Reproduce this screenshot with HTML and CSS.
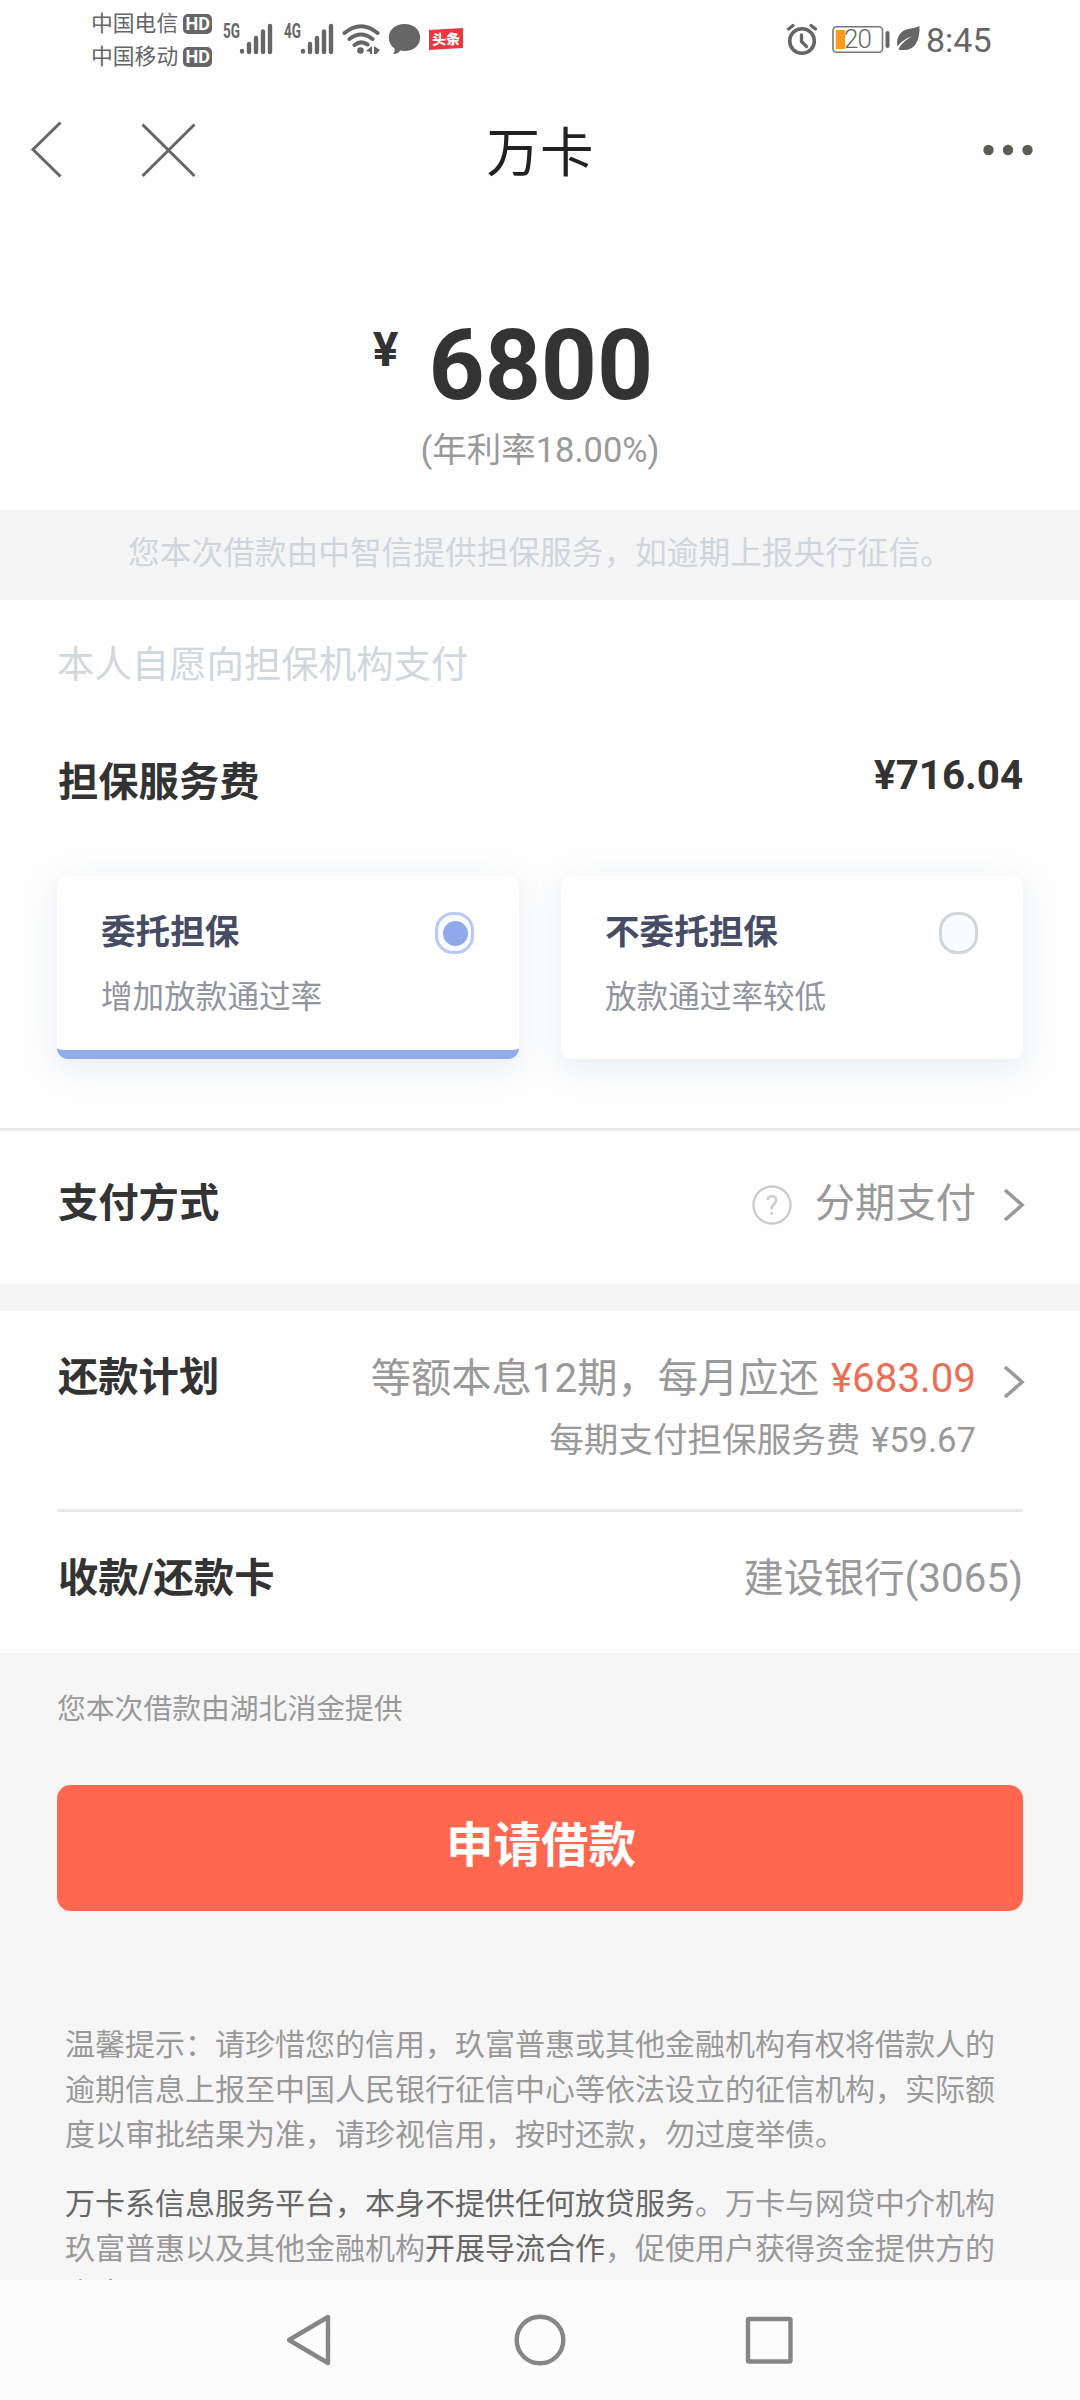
FILE: index.html
```html
<!DOCTYPE html>
<html lang="zh-CN">
<head>
<meta charset="utf-8">
<title>万卡</title>
<link rel="stylesheet" href="styles.css">
</head>
<body>
<div class="screen">
  <header class="status">
    <div class="carriers">
      <div class="carrier">中国电信<span class="hd">HD</span></div>
      <div class="carrier">中国移动<span class="hd">HD</span></div>
    </div>
    <svg class="signals" width="250" height="40" viewBox="220 20 250 40">
      <g fill="#666">
        <text class="net" x="223" y="37.500" textLength="17" lengthAdjust="spacingAndGlyphs">5G</text>
        <text class="net" x="284" y="37.500" textLength="17" lengthAdjust="spacingAndGlyphs">4G</text>
      </g>
      <g stroke="#666" stroke-width="4.400" stroke-linecap="round">
        <path d="M242 51v.6M249 44v8M256 38v14M263 31.500v20.500M270 26v26"/>
        <path d="M303 51v.6M310 44v8M317 38v14M324 31.500v20.500M331 26v26"/>
      </g>
      <g fill="none" stroke="#666" stroke-width="4" stroke-linecap="round">
        <path d="M344.500 33Q361 19.500 377.500 33M349.500 39Q361 30 372.500 39M354.500 45Q361 40 367.500 44.500"/>
      </g>
      <g fill="#666">
        <circle cx="360.500" cy="50.500" r="3.300"/>
        <path d="M366 51l6-5v8h-2v-2zM374 46l6 4-3.500 4H374z"/>
        <path d="M404.500 24c9 0 15.700 5.600 15.700 13.500S413.500 51 405 51c-2 0-3-.2-4.500-.5-2 2.500-5 3.700-7.500 3.500 1.500-1.800 2-3.200 1.500-5.500-3.700-2.500-5.700-6.200-5.700-11C388.800 29.600 395.500 24 404.500 24z"/>
      </g>
      <rect x="429.500" y="23" width="33" height="32" rx="5" fill="#fff" stroke="#f3f3f3"/>
      <path d="M429 30l34-2v20l-34 2z" fill="#e8393f"/>
      <text class="toutiao" x="432" y="44.500" textLength="28" transform="rotate(-2 446 39)">头条</text>
    </svg>
    <svg class="sysicons" width="140" height="40" viewBox="785 20 140 40">
      <g fill="none" stroke="#666" stroke-linecap="round">
        <circle cx="802" cy="41" r="12.300" stroke-width="3.600"/>
        <path d="M801.500 35v6.500l5 5" stroke-width="3.300"/>
        <path d="M788.500 29l4.500-3.500M815.500 29l-4.500-3.500" stroke-width="3.300"/>
        <rect x="833" y="26.800" width="49.500" height="25.500" rx="3.500" stroke="#777" stroke-width="1.600"/>
        <path d="M887.500 33v13" stroke-width="4"/>
      </g>
      <path d="M835.800 30h9.200v19h-9.200z" fill="#ff9a1e"/>
      <text class="level" x="844" y="48" textLength="28">20</text>
      <path d="M919.500 26c.5 14-4 23.500-14.500 24-3 .2-5 0-6.500-.5 2-5.500 7-9 13.500-13.500-7 3-11.500 6-14.500 10.500-2-9 3-16 11-17.500 5-1 8-1.500 11-3z" fill="#666"/>
    </svg>
    <span class="clock">8:45</span>
  </header>

  <nav class="titlebar">
    <svg width="180" height="60" viewBox="25 120 180 60" fill="none" stroke="#666" stroke-width="3">
      <path d="M60.500 122.500L33 149.500l27.500 27"/>
      <path d="M142.500 124.500l52 51.500M194.500 124.500l-52 51.500"/>
    </svg>
    <h1 class="title">万卡</h1>
    <svg class="more" width="50" height="12" viewBox="0 0 50 12" fill="#5c5c54"><circle cx="5.500" cy="6" r="5.200"/><circle cx="25" cy="6" r="5.200"/><circle cx="44.500" cy="6" r="5.200"/></svg>
  </nav>

  <main class="content">
    <section class="amount">
      <div class="sum"><span class="yen">¥</span><span class="num">6800</span></div>
      <div class="rate">(年利率18.00%)</div>
    </section>
    <p class="banner">您本次借款由中智信提供担保服务，如逾期上报央行征信。</p>
    <section class="fee">
      <p class="hint">本人自愿向担保机构支付</p>
      <div class="feerow"><b class="label">担保服务费</b><b class="price">¥716.04</b></div>
      <div class="options">
        <div class="card chosen"><div><h2 class="name">委托担保</h2><p class="note">增加放款通过率</p></div><i class="radio"></i></div>
        <div class="card"><div><h2 class="name">不委托担保</h2><p class="note">放款通过率较低</p></div><i class="radio"></i></div>
      </div>
    </section>
    <section class="row method">
      <b class="label">支付方式</b>
      <div class="value">
        <svg class="help" width="40" height="40" viewBox="0 0 40 40"><circle cx="20" cy="20" r="18.500" fill="none" stroke="#ccc" stroke-width="2.400"/><text x="20" y="29.500" text-anchor="middle">?</text></svg>
        <span>分期支付</span>
        <svg class="chev" width="22" height="34" viewBox="0 0 22 34"><path d="M2 2l17 15L2 32"/></svg>
      </div>
    </section>
    <div class="band"></div>
    <section class="row plan">
      <b class="label">还款计划</b>
      <div class="value">
        <div>
          <div class="monthly">等额本息12期，每月应还 <span class="due">¥683.09</span></div>
          <div class="sub">每期支付担保服务费 ¥59.67</div>
        </div>
        <svg class="chev" width="22" height="34" viewBox="0 0 22 34"><path d="M2 2l17 15L2 32"/></svg>
      </div>
    </section>
    <section class="row bank"><b class="label">收款/还款卡</b><div class="value">建设银行(3065)</div></section>
    <section class="foot">
      <p class="lender">您本次借款由湖北消金提供</p>
      <button class="apply">申请借款</button>
      <div class="legal">
        <p>温馨提示：请珍惜您的信用，玖富普惠或其他金融机构有权将借款人的逾期信息上报至中国人民银行征信中心等依法设立的征信机构，实际额度以审批结果为准，请珍视信用，按时还款，勿过度举债。</p>
        <p><em>万卡系信息服务平台，本身不提供任何放贷服务</em>。万卡与网贷中介机构玖富普惠以及其他金融机构<em>开展导流合作</em>，促使用户获得资金提供方的资金。</p>
      </div>
    </section>
  </main>

  <footer class="sysnav">
    <svg width="520" height="60" viewBox="280 2310 520 60" fill="none" stroke="#868686" stroke-width="4.400" stroke-linejoin="round">
      <path d="M328 2317v46L289 2340z"/>
      <circle cx="540" cy="2340" r="23.300"/>
      <rect x="748" y="2319" width="42.500" height="42.500" rx="1"/>
    </svg>
  </footer>
</div>
</body>
</html>
```
FILE: styles.css
```css
* { box-sizing: border-box; margin: 0; padding: 0; }
body { background: #fff; font-family: Roboto, "Noto Sans CJK SC", sans-serif; color: #333; }
svg { display: block; flex: none; }
.screen { width: 1080px; height: 2400px; display: flex; flex-direction: column; overflow: hidden; background: #fefefe; }

.status { height: 80px; flex: none; display: flex; align-items: center; padding: 0 90px 0 91px; color: #666; }
.carriers { width: 129px; font-size: 21.8px; }
.carrier { height: 33px; line-height: 33px; display: flex; align-items: center; white-space: nowrap; }
.hd { margin-left: 5px; width: 29px; height: 20px; border-radius: 5px; background: #666; color: #fff; font: bold 18px/20px Roboto, sans-serif; text-align: center; }
.net { font: bold 19.5px Roboto, sans-serif; }
.toutiao { font: 900 14px "Noto Sans CJK SC", sans-serif; fill: #fff; }
.sysicons { margin-left: auto; }
.level { font: 300 26px Roboto, sans-serif; fill: #666; }
.clock { font-size: 34px; line-height: 40px; margin-left: 1px; width: 64px; white-space: nowrap; }

.titlebar { height: 140px; flex: none; display: grid; grid-template-columns: 180px 1fr 180px; align-items: center; padding: 0 25px; }
.title { font-size: 53.5px; font-weight: 400; line-height: 60px; text-align: center; color: #222; padding-top: 8px; }
.more { justify-self: end; margin-right: 22px; }

.content { flex: 1; min-height: 0; overflow: hidden; }
.amount { height: 290px; padding-top: 96px; }
.sum { display: flex; justify-content: center; align-items: flex-start; font-weight: 700; height: 100px; padding-right: 54px; }
.yen { font-size: 48px; line-height: 56px; margin: 6px 30px 0 0; }
.num { font-size: 98px; line-height: 100px; }
.rate { font-size: 34.5px; line-height: 50px; margin-top: 9px; text-align: center; color: #999; }
.banner { height: 90px; background: #f5f5f5; font-size: 31.7px; line-height: 87px; text-align: center; color: #d0d5dc; white-space: nowrap; }
.fee { height: 531px; padding: 35px 57px 0; border-bottom: 3px solid #e9e9e9; }
.hint { font-size: 37.4px; line-height: 60px; color: #d2d7dd; }
.feerow { display: flex; justify-content: space-between; margin-top: 58px; height: 60px; }
.label { font-size: 40.3px; line-height: 60px; font-weight: 700; padding-left: 1px; }
.price { font-size: 40.3px; line-height: 46px; }
.options { display: grid; grid-template-columns: 1fr 1fr; gap: 42px; margin-top: 63px; }
.card { height: 183px; border-radius: 11px; background: #fff; box-shadow: 0 8px 32px rgba(130, 155, 190, .18); padding: 31px 45px 0 44px; display: flex; justify-content: space-between; overflow: hidden; }
.chosen { border-bottom: 9px solid #92abea; }
.name { font-size: 34.6px; line-height: 50px; color: #464c66; font-weight: 700; }
.note { font-size: 31.6px; line-height: 50px; margin-top: 16px; color: #9095a0; white-space: nowrap; }
.radio { width: 39px; height: 42px; flex: none; margin-top: 5px; border: 3px solid #d1d6db; border-radius: 18px; background: #f8fbff; display: flex; align-items: center; justify-content: center; }
.chosen .radio { border-color: #bac9f4; padding-left: 2px; }
.chosen .radio::after { content: ""; width: 25px; height: 25px; border-radius: 50%; background: #90a9ea; }

.row { display: flex; justify-content: space-between; margin: 0 57px; }
.value { display: flex; font-size: 40.3px; line-height: 60px; color: #999; white-space: nowrap; }
.method { height: 153px; padding-top: 43px; }
.help { margin: 11px 23px 0 0; }
.help text { font: 27px Roboto, sans-serif; fill: #ccc; }
.chev { margin: 14px -2px 0 27px; fill: none; stroke: #999; stroke-width: 3.6; }
.band { height: 27px; background: #f5f5f5; }
.plan { height: 201px; border-bottom: 3px solid #e9e9e9; padding-top: 37px; }
.plan .chev { margin-top: 17px; }
.plan .value { text-align: right; }
.monthly, .sub { word-spacing: 2px; }
.monthly { padding-top: 1px; }
.due { color: #ec6e57; }
.sub { font-size: 34.6px; line-height: 60px; margin-top: 1px; }
.bank { height: 141px; padding-top: 37px; }

.foot { background: #f6f6f6; padding: 31px 57px 0; height: 627px; }
.lender { font-size: 28.8px; line-height: 50px; color: #999; }
.apply { display: block; width: 966px; height: 126px; margin-top: 51px; border: 0; border-radius: 14px; background: #ff674f; color: #fff; font: 700 47.5px/60px Roboto, "Noto Sans CJK SC", sans-serif; padding: 0 0 5px 2px; }
.legal { margin: 111px 0 0 8px; width: 932px; font-size: 30px; line-height: 45px; color: #999; }
.legal p + p { margin-top: 24px; }
.legal em { font-style: normal; color: #666; }

.sysnav { height: 120px; flex: none; background: #fcfcfc; display: flex; align-items: center; justify-content: center; }
```
